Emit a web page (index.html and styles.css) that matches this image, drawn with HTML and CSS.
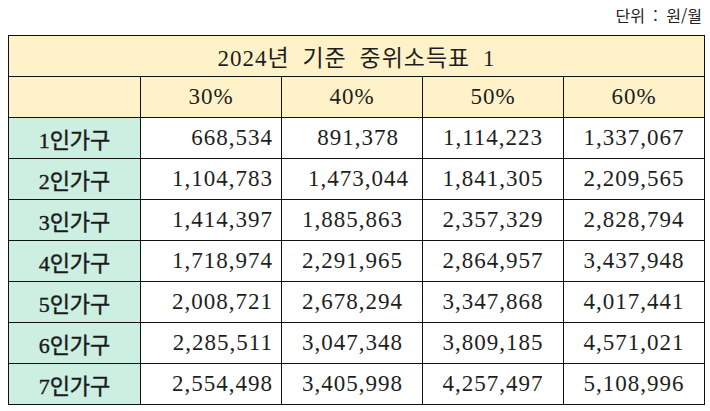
FILE: index.html
```html
<!DOCTYPE html>
<html lang="ko">
<head>
<meta charset="utf-8">
<link rel="stylesheet" href="styles.css">
</head>
<body>
<div class="unit">단위 : 원/월</div>
<table class="tbl">
  <colgroup>
    <col class="c-head">
    <col class="c-val">
    <col class="c-val">
    <col class="c-val">
    <col class="c-val">
  </colgroup>
  <tr class="r-title"><th colspan="5" class="title">2024년 기준 중위소득표 1</th></tr>
  <tr class="r-head"><th class="blank"></th><th>30%</th><th>40%</th><th>50%</th><th>60%</th></tr>
  <tr><th class="rh">1인가구</th><td class="right">668,534</td><td class="c40 c40a">891,378</td><td>1,114,223</td><td>1,337,067</td></tr>
  <tr><th class="rh">2인가구</th><td class="right">1,104,783</td><td class="c40 c40b">1,473,044</td><td>1,841,305</td><td>2,209,565</td></tr>
  <tr><th class="rh">3인가구</th><td class="right">1,414,397</td><td class="c40">1,885,863</td><td>2,357,329</td><td>2,828,794</td></tr>
  <tr><th class="rh">4인가구</th><td class="right">1,718,974</td><td class="c40">2,291,965</td><td>2,864,957</td><td>3,437,948</td></tr>
  <tr><th class="rh">5인가구</th><td class="right">2,008,721</td><td class="c40">2,678,294</td><td>3,347,868</td><td>4,017,441</td></tr>
  <tr><th class="rh">6인가구</th><td class="right">2,285,511</td><td class="c40">3,047,348</td><td>3,809,185</td><td>4,571,021</td></tr>
  <tr><th class="rh">7인가구</th><td class="right">2,554,498</td><td class="c40">3,405,998</td><td>4,257,497</td><td>5,108,996</td></tr>
</table>
</body>
</html>
```
FILE: styles.css
```css
html, body {
  margin: 0;
  padding: 0;
  background: #ffffff;
}
body {
  padding: 0 6px 0 8px;
  font-family: "Liberation Serif", "Noto Sans CJK KR", serif;
  color: #1e1e1e;
}
.unit {
  height: 35px;
  box-sizing: border-box;
  padding-top: 5px;
  text-align: right;
  padding-right: 2px;
  font-family: "Noto Sans CJK KR", sans-serif;
  font-size: 16px;
  line-height: 20px;
  word-spacing: 4px;
  color: #222;
}
.tbl {
  border-collapse: collapse;
  table-layout: fixed;
  width: 696px;
}
.c-head { width: 132px; }
.c-val { width: 141px; }
.tbl th, .tbl td {
  border: 1px solid #111;
  padding: 0;
  text-align: center;
  vertical-align: middle;
  font-size: 23px;
  font-weight: normal;
  letter-spacing: 1px;
  white-space: nowrap;
}
.r-title { height: 40px; }
.r-head { height: 42px; }
.tbl tr { height: 41px; }
.title, .r-head th {
  background: #fff2c9;
}
.title {
  font-size: 22px;
  letter-spacing: 0.5px;
  word-spacing: 6px;
  padding-top: 1px;
}
.tbl th.rh {
  background: #ccefe2;
  font-family: "Liberation Serif", "Noto Sans CJK KR", serif;
  font-size: 22px;
  font-weight: normal;
  -webkit-text-stroke: 0.4px #1a1a1a;
  letter-spacing: 0;
  color: #1a1a1a;
}
.tbl td.right {
  text-align: right;
  padding-right: 8px;
}
.tbl td.c40 {
  text-align: right;
  padding-right: 19px;
}
.tbl td.c40a { padding-right: 23px; }
.tbl td.c40b { padding-right: 13px; }
```
